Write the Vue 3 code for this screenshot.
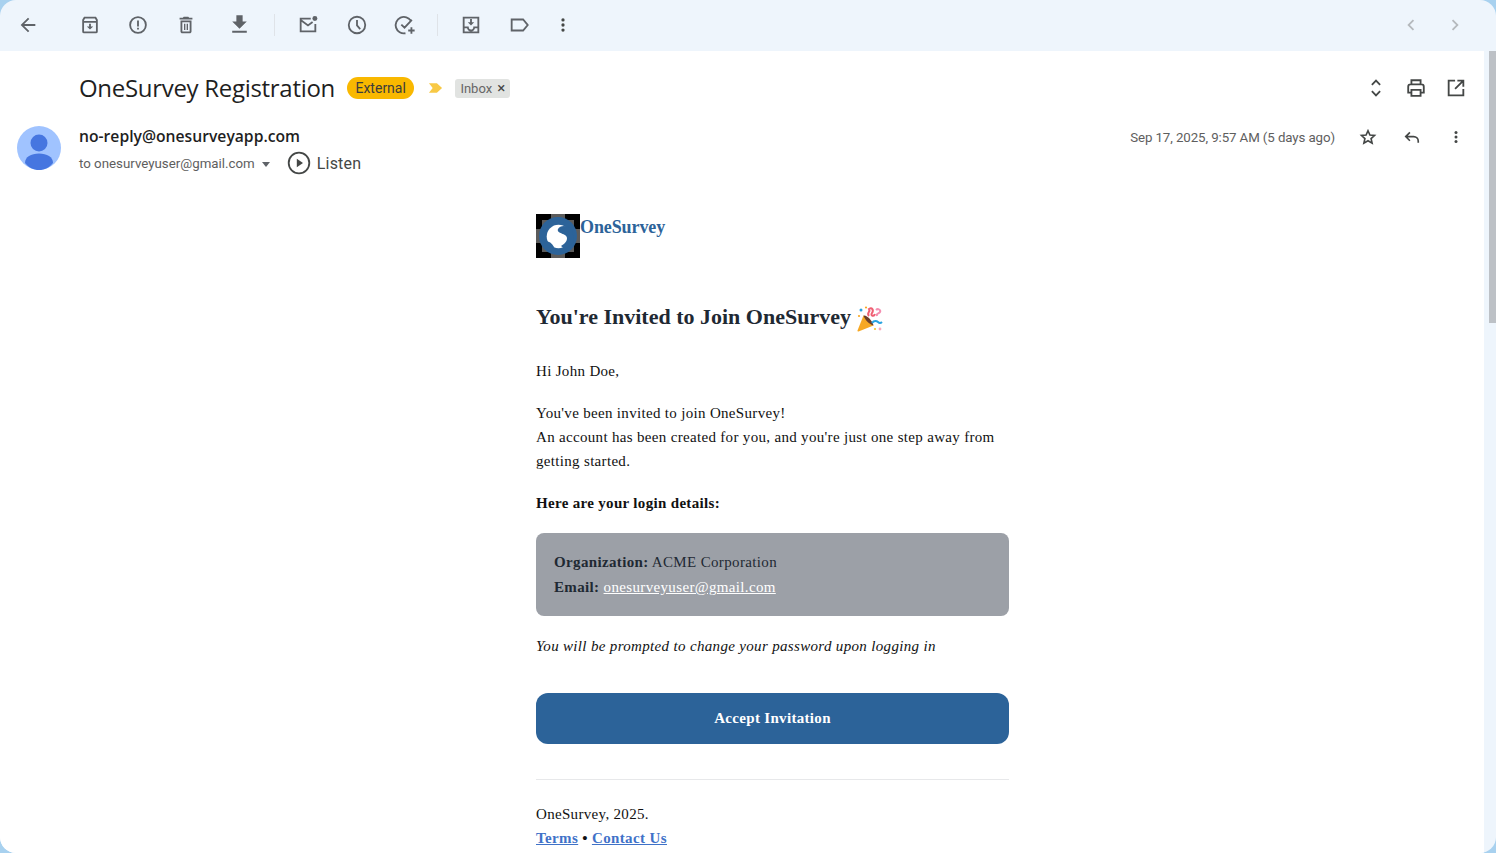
<template>
  <div class="window">
    <div class="toolbar">
      <button class="tool first">
        <svg viewBox="0 0 24 24"><path d="M20 11H7.830l5.590-5.590L12 4l-8 8 8 8 1.410-1.410L7.830 13H20v-2z" /></svg>
      </button>
      <button class="tool archive">
        <svg viewBox="0 0 24 24"><path class="line" d="M4.500 8.500h15M6 4h12l1.500 2.500v12.500a1 1 0 0 1-1 1h-13a1 1 0 0 1-1-1V6.500z" /><path d="M11 10.500h2v3h2.500L12 17l-3.500-3.500H11z" /></svg>
      </button>
      <button class="tool">
        <svg viewBox="0 0 24 24"><circle class="line" cx="12" cy="12" r="8.600" /><path d="M11 7h2v6.500h-2zM11 15h2v2h-2z" /></svg>
      </button>
      <button class="tool">
        <svg viewBox="0 0 24 24"><path d="M6 19c0 1.100.9 2 2 2h8c1.100 0 2-.9 2-2V7H6v12zM8 9h8v10H8V9zm7.500-5l-1-1h-5l-1 1H5v2h14V4zM9.800 10.500h1.500v7H9.800zM12.700 10.500h1.500v7h-1.500z" /></svg>
      </button>
      <button class="tool download">
        <svg viewBox="0 0 24 24"><path d="M19 9h-4V3H9v6H5l7 7 7-7zM5 18v2h14v-2H5z" /></svg>
      </button>
      <span class="divider"></span>
      <button class="tool mail">
        <svg viewBox="0 0 24 24"><path class="line" d="M15 5H4v14h16v-8M4 6.500l8 6 5-3.700" /><circle cx="19.500" cy="5" r="2.700" /></svg>
      </button>
      <button class="tool clock">
        <svg viewBox="0 0 24 24"><circle class="line" cx="12" cy="12" r="9" /><path class="line" d="M12 6.500V12.500l3.500 4" /></svg>
      </button>
      <button class="tool">
        <svg viewBox="0 0 24 24"><path class="line" d="M18.500 7.500A9 9 0 1 0 12.500 21M8 11.500l3.500 3.500 8-8.500M19 14.500v7M15.500 18h7" /></svg>
      </button>
      <span class="divider second"></span>
      <button class="tool move">
        <svg viewBox="0 0 24 24"><path class="line" d="M4 4h16v16H4zM4 14.500h4.500a3.500 3.500 0 0 0 7 0H20" /><path d="M11 5.500h2V9h2.500L12 12.500 8.500 9H11z" /></svg>
      </button>
      <button class="tool">
        <svg viewBox="0 0 24 24"><path class="line" d="M4 6h12.500l5 6-5 6H4z" /></svg>
      </button>
      <button class="tool dots">
        <svg viewBox="0 0 24 24"><circle cx="12" cy="6.500" r="1.800" /><circle cx="12" cy="12" r="1.800" /><circle cx="12" cy="17.500" r="1.800" /></svg>
      </button>
      <button class="tool pager">
        <svg viewBox="0 0 24 24"><path d="M15.400 7.400L14 6l-6 6 6 6 1.400-1.400L10.800 12z" /></svg>
      </button>
      <button class="tool pager next">
        <svg viewBox="0 0 24 24"><path d="M8.600 7.400L10 6l6 6-6 6-1.400-1.400L13.200 12z" /></svg>
      </button>
    </div>

    <div class="panel">
      <div class="subject-row">
        <h1 class="subject">OneSurvey Registration</h1>
        <span class="external">External</span>
        <svg class="marker" viewBox="0 0 16 12"><path d="M1 1h8.500L15 6l-5.500 5H1l4-5z" /></svg>
        <span class="inbox">Inbox <span class="close">×</span></span>
        <div class="subject-actions">
          <svg class="head-icon" viewBox="0 0 24 24"><path class="line" d="M7.500 8.500L12 4l4.500 4.500M7.500 15.500L12 20l4.500-4.500" /></svg>
          <svg class="head-icon" viewBox="0 0 24 24"><path class="line" d="M7 8V3.500h10V8M7 17H3.500v-6.500A2.500 2.500 0 0 1 6 8h12a2.500 2.500 0 0 1 2.500 2.500V17H17M7 14h10v6.500H7z" /></svg>
          <svg class="head-icon" viewBox="0 0 24 24"><path class="line" d="M11 4H4v16h16v-7M13.500 4H20v6.500M20 4l-9 9" /></svg>
        </div>
      </div>

      <div class="sender-row">
        <svg class="avatar" viewBox="0 0 44 44">
          <circle cx="22" cy="22" r="22" fill="#a0c3ff" />
          <circle cx="22" cy="17" r="8.500" fill="#4676e0" />
          <path d="M8 37c0-6 6-9.500 14-9.500S36 31 36 37c-3.500 4.500-8.500 7-14 7S11.500 41.500 8 37z" fill="#4676e0" />
        </svg>
        <div class="sender-info">
          <div class="sender-name">no-reply@onesurveyapp.com</div>
          <div class="to-line">
            <span>to onesurveyuser@gmail.com</span>
            <span class="caret"></span>
            <svg class="play" viewBox="0 0 24 24"><circle cx="12" cy="12" r="10.300" fill="none" stroke="#444746" stroke-width="1.800" /><path d="M9.800 7.800L16 12l-6.200 4.200z" fill="#444746" /></svg>
            <span class="listen">Listen</span>
          </div>
        </div>
        <div class="sender-meta">
          <span class="date">Sep 17, 2025, 9:57 AM (5 days ago)</span>
          <svg class="meta-icon star" viewBox="0 0 24 24"><path class="line" d="M12 4.500l2.300 5.100 5.500.6-4.100 3.700 1.200 5.500L12 16.600l-4.900 2.800 1.200-5.500-4.100-3.700 5.500-.6z" /></svg>
          <svg class="meta-icon" viewBox="0 0 24 24"><path class="line" d="M9.500 6.500L4.500 11.500l5 5M5 11.500h9a5.500 5.500 0 0 1 5.500 5.500v2" /></svg>
          <svg class="meta-icon" viewBox="0 0 24 24"><circle cx="12" cy="6.500" r="1.800" /><circle cx="12" cy="12" r="1.800" /><circle cx="12" cy="17.500" r="1.800" /></svg>
        </div>
      </div>

      <div class="message">
        <div class="mail-column">
          <div class="brand">
            <svg class="logo" viewBox="0 0 44 44">
              <rect width="44" height="44" fill="#000" />
              <path d="M15 0h14v6H15zM15 38h14v6H15zM0 15h6v14H0zM38 15h6v14h-6zM6 6h6v6H6zM32 6h6v6h-6zM6 32h6v6H6zM32 32h6v6h-6z" fill="#5b5b5b" />
              <circle cx="22" cy="22" r="19" fill="#2c6399" />
              <circle cx="22.500" cy="22.500" r="11.800" fill="#fff" />
              <path d="M36 15c-5-4-12-4-14 0-2 5 9 4 9 9 0 4-3 6-6 8l5 4 8-9zM9 27c4 0 7 2 9 6l-3 5-8-5z" fill="#2c6399" />
            </svg>
            <span class="brand-name">OneSurvey</span>
          </div>

          <h2 class="title">
            You're Invited to Join OneSurvey
            <svg class="popper" viewBox="0 0 26 26">
              <path d="M6.500 9.500L16.500 19.500 1.500 25.500a.8.8 0 0 1-1-1z" fill="#f7a823" />
              <path d="M6.500 9.500c3-1 9 5 10 10-4-1-9-6-10-10z" fill="#6b3f2a" />
              <path d="M12 10c-3-3 2-4 0-7 3-2 5 1 3 4s2 4 3 1" fill="none" stroke="#ef5f72" stroke-width="2" />
              <path d="M19 4c2-2 5 0 4 2s-4 1-3 4" fill="none" stroke="#f48fb1" stroke-width="2" />
              <path d="M15 17c2-3 5-2 6-1s2 2 4 0" fill="none" stroke="#29a3e0" stroke-width="2" />
              <circle cx="4" cy="4" r="1.500" fill="#29a3e0" />
              <circle cx="9" cy="1.500" r="1.100" fill="#f7a823" />
              <circle cx="2" cy="10" r="1.100" fill="#f7a823" />
              <circle cx="23" cy="23" r="1.400" fill="#f9a8bc" />
              <circle cx="18" cy="23" r="1.100" fill="#f4c430" />
            </svg>
          </h2>

          <p class="hello">Hi John Doe,</p>
          <p class="invite">
            You've been invited to join OneSurvey!<br />
            An account has been created for you, and you're just one step away from getting started.
          </p>
          <p class="details"><strong>Here are your login details:</strong></p>

          <div class="login-box">
            <div><strong>Organization:</strong> ACME Corporation</div>
            <div><strong>Email:</strong> <a href="#" class="box-link">onesurveyuser@gmail.com</a></div>
          </div>

          <p class="notice">You will be prompted to change your password upon logging in</p>

          <a href="#" class="accept">Accept Invitation</a>

          <hr class="rule" />

          <div class="footer">
            <div>OneSurvey, 2025.</div>
            <div><a href="#" class="foot-link">Terms</a> <strong>•</strong> <a href="#" class="foot-link">Contact Us</a></div>
          </div>
        </div>
      </div>
    </div>

    <div class="scrollbar"></div>
  </div>
</template>

<script setup>
</script>

<style>
html,
body {
  margin: 0;
  height: 100%;
  overflow: hidden;
  background: #a8d1ef;
}
</style>

<style scoped>
.window {
  position: relative;
  width: 1496px;
  height: 853px;
  background: #eef5fc;
  border-radius: 16px;
  overflow: hidden;
  display: flex;
  flex-direction: column;
  font-family: Roboto, "Liberation Sans", sans-serif;
}

.toolbar {
  height: 50px;
  margin-bottom: 1px;
  flex: none;
  display: flex;
  align-items: center;
  padding-left: 8px;
  padding-right: 21px;
  box-sizing: border-box;
}

.tool {
  width: 40px;
  height: 40px;
  flex: none;
  margin-left: 8px;
  padding: 0;
  border: none;
  background: none;
  display: flex;
  align-items: center;
  justify-content: center;
}

.tool svg {
  width: 22px;
  height: 22px;
  fill: #5f6368;
}

.tool .line {
  fill: none;
  stroke: #5f6368;
  stroke-width: 2;
}

.head-icon .line,
.meta-icon .line {
  fill: none;
  stroke: #444746;
  stroke-width: 2;
}

.first {
  margin-left: 0;
}

.archive {
  margin-left: 22px;
}

.download {
  margin-left: 13px;
}

.tool.download svg {
  width: 25px;
  height: 25px;
  margin-top: -2px;
}

.divider {
  width: 1px;
  height: 22px;
  margin-left: 15px;
  background: #dfe3e8;
  flex: none;
}

.divider.second {
  margin-left: 12px;
}

.mail {
  margin-left: 13px;
}

.clock {
  margin-left: 9px;
}

.move {
  margin-left: 13px;
}

.dots {
  margin-left: 4px;
}

.tool.dots svg {
  fill: #444746;
}

.pager {
  margin-left: auto;
}

.pager.next {
  margin-left: 4px;
}

.tool.pager svg {
  fill: #b5b9bd;
}

.panel {
  flex: 1;
  width: 1484px;
  background: #fff;
  overflow: hidden;
}

.subject-row {
  height: 44px;
  margin-top: 15px;
  display: flex;
  align-items: center;
  padding-left: 79px;
  padding-right: 17px;
}

.subject {
  margin: -2px 0 0;
  font-family: "Open Sans", sans-serif;
  font-size: 24px;
  font-weight: 400;
  color: #1f1f1f;
  letter-spacing: -0.3px;
}

.external {
  margin-left: 12px;
  height: 22px;
  line-height: 22px;
  padding: 0 8.500px;
  border-radius: 11px;
  background: #f9b800;
  color: #3c3c3c;
  font-size: 14px;
}

.marker {
  width: 15px;
  height: 12px;
  margin-left: 14px;
  fill: #f8c945;
}

.inbox {
  margin-left: 12px;
  height: 19px;
  line-height: 19px;
  padding: 0 5px;
  border-radius: 3px;
  background: #e1e3e1;
  color: #666;
  font-size: 13px;
}

.close {
  color: #444;
  margin-left: 2px;
  font-size: 15px;
}

.subject-actions {
  margin-left: auto;
  display: flex;
  gap: 18px;
}

.head-icon {
  width: 22px;
  height: 22px;
}

.sender-row {
  display: flex;
  align-items: flex-start;
  height: 52px;
  margin-top: 17px;
  padding-left: 17px;
  padding-right: 18px;
}

.avatar {
  width: 44px;
  height: 44px;
  margin-top: -1px;
  flex: none;
}

.sender-info {
  margin-left: 18px;
}

.sender-name {
  font-family: "Open Sans", sans-serif;
  font-size: 15.700px;
  line-height: 20px;
  margin-top: -1px;
  font-weight: 600;
  color: #1f1f1f;
}

.to-line {
  display: flex;
  align-items: center;
  height: 24px;
  margin-top: 5px;
  color: #5e5e5e;
  font-size: 13.300px;
}

.caret {
  width: 0;
  height: 0;
  margin-left: 7px;
  margin-top: 2px;
  border-left: 4.500px solid transparent;
  border-right: 4.500px solid transparent;
  border-top: 5px solid #5f6368;
}

.play {
  width: 24px;
  height: 24px;
  margin-left: 17px;
}

.listen {
  margin-left: 6px;
  font-size: 16px;
  letter-spacing: 0.2px;
  color: #444746;
}

.sender-meta {
  margin-left: auto;
  margin-top: -2px;
  display: flex;
  align-items: center;
  height: 24px;
}

.date {
  font-size: 13.300px;
  color: #5e5e5e;
  letter-spacing: -0.1px;
  margin-right: 23px;
}

.meta-icon {
  width: 20px;
  height: 20px;
  margin-left: 24px;
  fill: #444746;
}

.meta-icon.star {
  margin-left: 0;
}

.message {
  display: flex;
  justify-content: center;
  padding-left: 79px;
  padding-right: 18px;
}

.mail-column {
  width: 473px;
  font-family: "Liberation Serif", serif;
  font-size: 15px;
  line-height: 24px;
  color: #111;
  letter-spacing: 0.32px;
  padding-top: 35px;
}

.brand {
  display: flex;
  height: 44px;
}

.logo {
  width: 44px;
  height: 44px;
  flex: none;
}

.brand-name {
  font-size: 18px;
  line-height: 26px;
  font-weight: 700;
  color: #2c6399;
  letter-spacing: -0.1px;
}

.title {
  margin: 43px 0 0;
  font-size: 22px;
  line-height: 32px;
  font-weight: 700;
  color: #1f2933;
  display: flex;
  align-items: center;
  gap: 6px;
  letter-spacing: 0;
}

.popper {
  width: 26px;
  height: 26px;
  margin-top: 3px;
}

.hello {
  margin: 26px 0 0;
}

.invite {
  margin: 18px 0 0;
}

.details {
  margin: 18px 0 0;
}

.login-box {
  margin-top: 18px;
  height: 83px;
  padding: 17px 18px 0;
  box-sizing: border-box;
  border-radius: 8px;
  background: #9ca0a7;
  color: #1f2933;
  line-height: 25px;
  letter-spacing: 0.35px;
}

.box-link {
  color: #fff;
}

.notice {
  margin: 18px 0 0;
  font-style: italic;
  letter-spacing: 0.33px;
}

.accept {
  display: block;
  margin-top: 35px;
  height: 51px;
  line-height: 51px;
  text-align: center;
  border-radius: 12px;
  background: #2c6399;
  color: #fff;
  font-weight: 700;
  text-decoration: none;
}

.rule {
  margin: 35px 0 0;
  border: none;
  border-top: 1px solid #e7e8ea;
}

.footer {
  margin-top: 22px;
}

.foot-link {
  color: #3f72c8;
  font-weight: 700;
  letter-spacing: 0.38px;
}

.scrollbar {
  position: absolute;
  right: 0;
  top: 51px;
  width: 7px;
  height: 272px;
  background: #bdc1c6;
}
</style>
